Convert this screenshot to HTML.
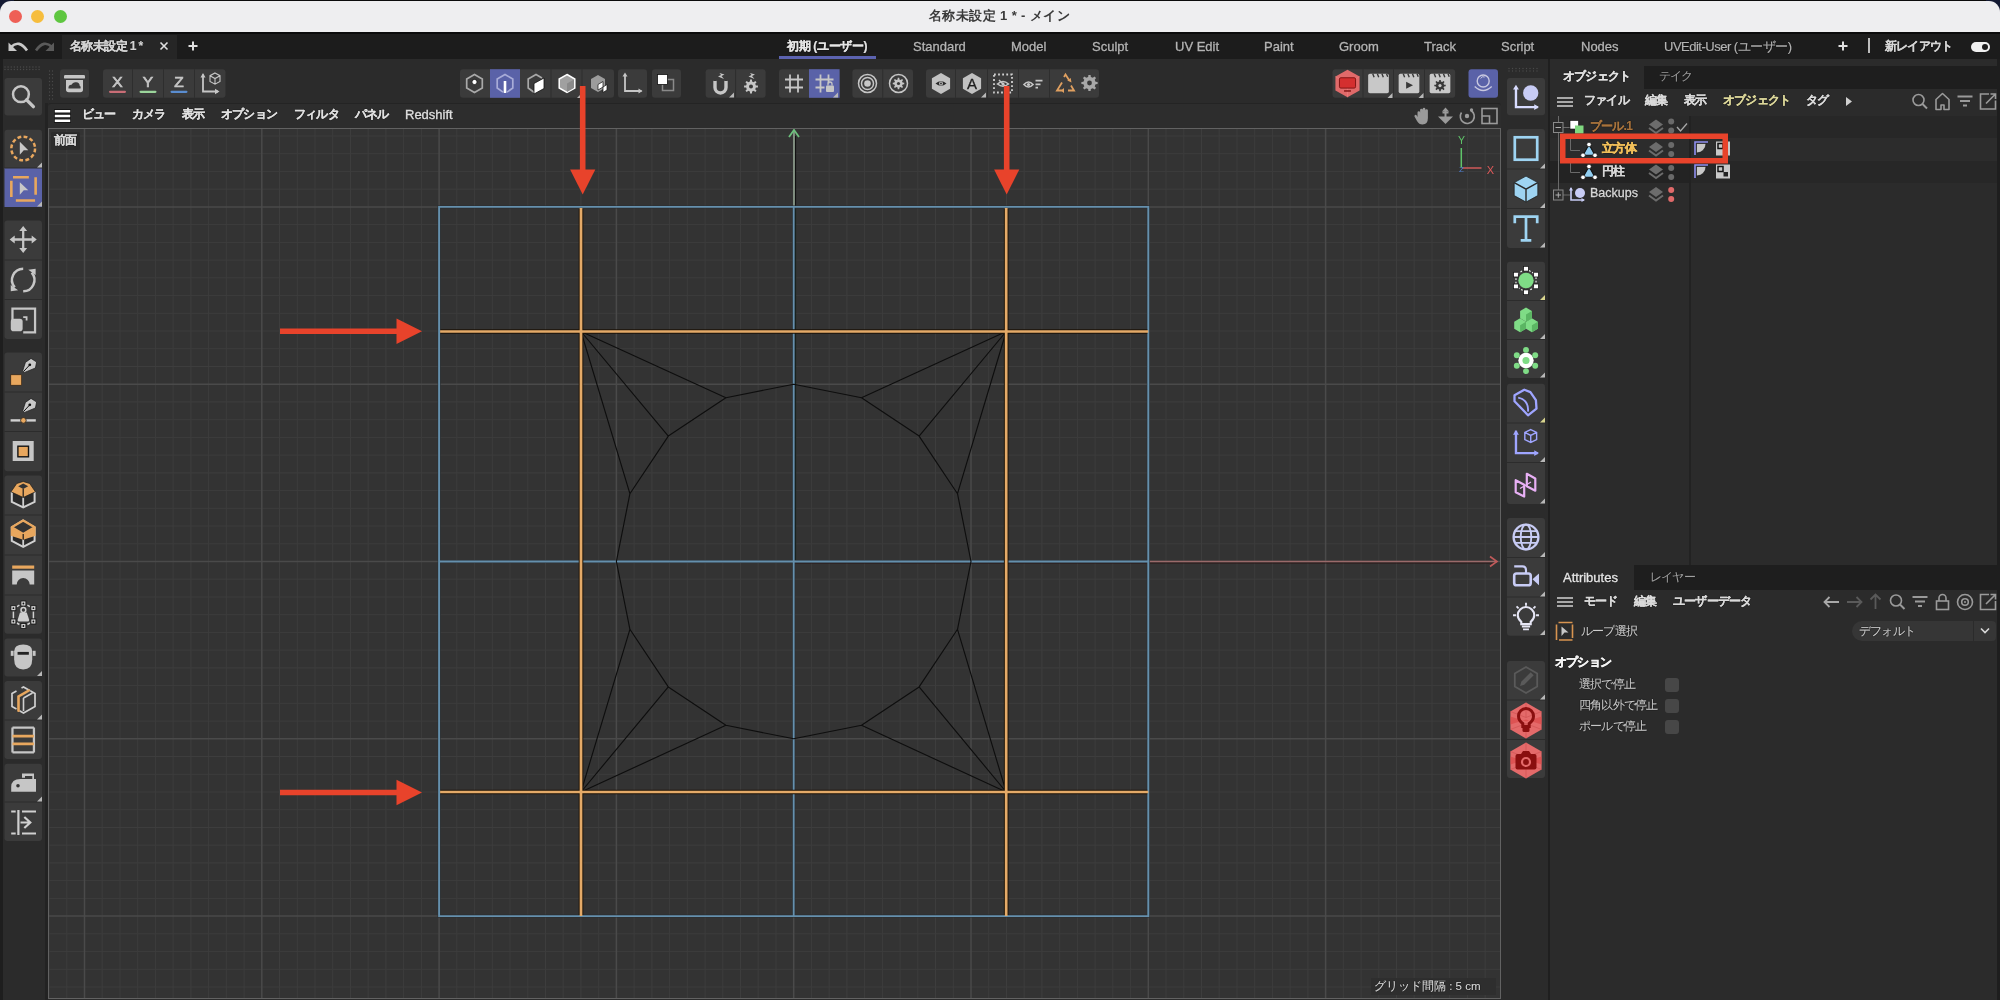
<!DOCTYPE html>
<html lang="ja"><head><meta charset="utf-8">
<style>
html,body{margin:0;padding:0}
body{width:2000px;height:1000px;overflow:hidden;background:#0b0b0b;font-family:"Liberation Sans",sans-serif;position:relative}
.a{position:absolute}
.t{position:absolute;white-space:nowrap;line-height:1;will-change:transform}
.d{text-shadow:0 0 1px #000,0 0 1px #000}
.w{-webkit-text-stroke:0.35px currentColor}
.j{font-weight:600;letter-spacing:-0.8px;-webkit-text-stroke:0.2px currentColor}
.r{font-weight:400;-webkit-text-stroke:0.1px currentColor}
.btn{position:absolute;background:#353535;border-radius:3px}
.sel{background:#5a62a6}
svg{position:absolute;overflow:visible}
.lt{top:40px;font-size:13px;color:#b4b4b4}
.mn{top:108px;font-size:12px;color:#e0e0e0}
.om{top:94px;font-size:12px;color:#dadada}
.op{font-size:11.5px;color:#c8c8c8}
.cb{left:1665px;width:14px;height:14px;border-radius:3px;background:#474747}
</style></head><body>
<!-- title bar -->
<div class="a" style="left:0;top:0;width:14px;height:14px;background:#141a33"></div><div class="a" style="left:1986px;top:0;width:14px;height:14px;background:#141a33"></div>
<div class="a" style="left:0;top:1px;width:2000px;height:31px;background:#eeeef0;border-radius:11px 11px 0 0"></div>
<div class="a" style="left:9px;top:10px;width:13px;height:13px;border-radius:50%;background:#ee5f56"></div>
<div class="a" style="left:31px;top:10px;width:13px;height:13px;border-radius:50%;background:#f6bd3d"></div>
<div class="a" style="left:54px;top:10px;width:13px;height:13px;border-radius:50%;background:#5ec640"></div>
<div class="t" style="left:929px;top:9px;font-size:13px;color:#3a3a3a;font-weight:bold;letter-spacing:0.4px">名称未設定 1 * - メイン</div>

<!-- tab bar -->
<div class="a" style="left:0;top:34px;width:2000px;height:25px;background:#1c1c1c"></div>
<div class="a" style="left:62px;top:35px;width:115px;height:24px;background:#262626"></div>
<div class="t d j" style="left:70px;top:40px;font-size:12px;color:#d4d4d4;letter-spacing:-0.6px">名称未設定 1&nbsp;*</div>
<svg style="left:0;top:33px" width="62" height="26" viewBox="0 0 62 26">
<path d="M11 14 Q19 6 27 17.5" stroke="#c8c8c8" stroke-width="2.6" fill="none"/><path d="M8.5 9.5V18H17Z" fill="#c8c8c8"/>
<path d="M36 17.5 Q44 6 52 14" stroke="#5a5a5a" stroke-width="2.6" fill="none"/><path d="M54 9.5V18H45.5Z" fill="#5a5a5a"/>
</svg>
<svg style="left:158px;top:40px" width="12" height="12" viewBox="0 0 12 12"><path d="M2.5 2.5L9.5 9.5M9.5 2.5L2.5 9.5" stroke="#e0e0e0" stroke-width="1.6"/></svg>
<svg style="left:187px;top:40px" width="12" height="12" viewBox="0 0 12 12"><path d="M6 1.5V10.5M1.5 6H10.5" stroke="#e0e0e0" stroke-width="2"/></svg>
<div class="a" style="left:779px;top:55.5px;width:97px;height:3.5px;background:#5c63b0"></div>
<div class="t d j" style="left:787px;top:40px;font-size:12px;color:#e6e6e6;letter-spacing:-0.35px">初期 (ユーザー)</div>
<div class="t d w lt" style="left:913px">Standard</div>
<div class="t d w lt" style="left:1011px">Model</div>
<div class="t d w lt" style="left:1092px">Sculpt</div>
<div class="t d w lt" style="left:1175px">UV Edit</div>
<div class="t d w lt" style="left:1264px">Paint</div>
<div class="t d w lt" style="left:1339px">Groom</div>
<div class="t d w lt" style="left:1424px">Track</div>
<div class="t d w lt" style="left:1501px">Script</div>
<div class="t d w lt" style="left:1581px">Nodes</div>
<div class="t d j lt" style="left:1664px;font-weight:400;letter-spacing:-0.5px">UVEdit-User (ユーザー)</div>
<svg style="left:1837px;top:40px" width="12" height="12" viewBox="0 0 12 12"><path d="M6 1.5V10.5M1.5 6H10.5" stroke="#e0e0e0" stroke-width="2"/></svg>
<div class="a" style="left:1868px;top:38px;width:1.5px;height:15px;background:#bdbdbd"></div>
<div class="t d j" style="left:1885px;top:40px;font-size:12px;color:#d4d4d4">新レイアウト</div>
<div class="a" style="left:1971px;top:42px;width:19px;height:10px;border-radius:5px;background:#f0f0f0"></div>
<div class="a" style="left:1982px;top:44px;width:6px;height:6px;border-radius:50%;background:#1c1c1c"></div>

<!-- main bg -->
<div class="a" style="left:0;top:59px;width:2000px;height:941px;background:#2b2b2b"></div>
<div class="a" style="left:0;top:59px;width:2.5px;height:941px;background:#1e1e1e"></div>
<div class="a" style="left:45px;top:103px;width:3px;height:897px;background:#232323"></div>
<div class="a" style="left:1548px;top:59px;width:2px;height:941px;background:#1f1f1f"></div>
<div class="a" style="left:1997px;top:59px;width:3px;height:941px;background:#1e1e1e"></div>

<!-- viewport menu bar -->
<div class="a" style="left:48px;top:103px;width:1453px;height:25px;background:#2d2d2d;border-top:1px solid #242424;box-sizing:border-box;border-radius:3px 3px 0 0"></div>
<div class="t d j mn" style="left:82px">ビュー</div>
<div class="t d j mn" style="left:132px">カメラ</div>
<div class="t d j mn" style="left:182px">表示</div>
<div class="t d j mn" style="left:221px">オプション</div>
<div class="t d j mn" style="left:294px">フィルタ</div>
<div class="t d j mn" style="left:355px">パネル</div>
<div class="t d w mn" style="left:405px;font-size:13px">Redshift</div>
<!-- viewport -->
<div class="a" style="left:48px;top:128px;width:1453px;height:871px;background:#333333;border:1px solid #626262;box-sizing:border-box"></div>
<svg class="a" style="left:0;top:0" width="2000" height="1000" viewBox="0 0 2000 1000">
<defs><clipPath id="vpc"><rect x="49" y="129" width="1451" height="869"/></clipPath></defs>
<g clip-path="url(#vpc)">
<path d="M49.0 129V1000M66.8 129V1000M102.2 129V1000M120.0 129V1000M137.7 129V1000M155.4 129V1000M173.1 129V1000M190.9 129V1000M208.6 129V1000M226.3 129V1000M244.1 129V1000M279.5 129V1000M297.3 129V1000M315.0 129V1000M332.7 129V1000M350.5 129V1000M368.2 129V1000M49 136.0H1500M385.9 129V1000M49 153.7H1500M403.6 129V1000M49 171.4H1500M421.4 129V1000M49 189.2H1500M456.8 129V1000M49 224.6H1500M474.6 129V1000M49 242.4H1500M492.3 129V1000M49 260.1H1500M510.0 129V1000M49 277.8H1500M527.8 129V1000M49 295.6H1500M545.5 129V1000M49 313.3H1500M563.2 129V1000M49 331.0H1500M580.9 129V1000M49 348.7H1500M598.7 129V1000M49 366.5H1500M634.1 129V1000M49 401.9H1500M651.9 129V1000M49 419.7H1500M669.6 129V1000M49 437.4H1500M687.3 129V1000M49 455.1H1500M705.1 129V1000M49 472.9H1500M722.8 129V1000M49 490.6H1500M740.5 129V1000M49 508.3H1500M758.2 129V1000M49 526.0H1500M776.0 129V1000M49 543.8H1500M811.4 129V1000M49 579.2H1500M829.2 129V1000M49 597.0H1500M846.9 129V1000M49 614.7H1500M864.6 129V1000M49 632.4H1500M882.4 129V1000M49 650.1H1500M900.1 129V1000M49 667.9H1500M917.8 129V1000M49 685.6H1500M935.5 129V1000M49 703.3H1500M953.3 129V1000M49 721.1H1500M988.7 129V1000M49 756.5H1500M1006.5 129V1000M49 774.3H1500M1024.2 129V1000M49 792.0H1500M1041.9 129V1000M49 809.7H1500M1059.7 129V1000M49 827.5H1500M1077.4 129V1000M49 845.2H1500M1095.1 129V1000M49 862.9H1500M1112.8 129V1000M49 880.6H1500M1130.6 129V1000M49 898.4H1500M1166.0 129V1000M49 933.8H1500M1183.8 129V1000M49 951.6H1500M1201.5 129V1000M49 969.3H1500M1219.2 129V1000M49 987.0H1500M1237.0 129V1000M1254.7 129V1000M1272.4 129V1000M1290.1 129V1000M1307.9 129V1000M1343.3 129V1000M1361.1 129V1000M1378.8 129V1000M1396.5 129V1000M1414.2 129V1000M1432.0 129V1000M1449.7 129V1000M1467.4 129V1000M1485.2 129V1000" stroke="#3d3d3d" stroke-width="1" fill="none"/>
<path d="M84.5 129V1000M261.8 129V1000M439.1 129V1000M49 206.9H1500M616.4 129V1000M49 384.2H1500M793.7 129V1000M49 561.5H1500M971.0 129V1000M49 738.8H1500M1148.3 129V1000M49 916.1H1500M1325.6 129V1000" stroke="#4a4a4a" stroke-width="1.5" fill="none"/>
<path d="M795.5 136V206" stroke="#111" stroke-width="1.2"/>
<path d="M794 130V206" stroke="#8fa08f" stroke-width="1.6"/>
<path d="M789 137L794 130L799 137" stroke="#6cc07c" stroke-width="1.8" fill="none"/>
<path d="M1149 563H1496" stroke="#2a1616" stroke-width="1.2"/>
<path d="M1149 561.5H1497" stroke="#9a6a6a" stroke-width="1.4"/>
<path d="M1490 556.5L1497 561.5L1490 566.5" stroke="#c05a5a" stroke-width="1.6" fill="none"/>
<path d="M795.5 208V560" stroke="#14201a" stroke-width="1.2"/>
<path d="M795 563H1147" stroke="#2a1616" stroke-width="1.2"/>
<path d="M439.1 206.9H1148.3V916.1H439.1ZM793.7 206.9V916.1M439.1 561.5H1148.3" stroke="#2a2f33" stroke-width="3" fill="none"/>
<path d="M439.1 206.9H1148.3V916.1H439.1Z" stroke="#6590ad" stroke-width="1.9" fill="none"/>
<path d="M793.7 206.9V916.1M439.1 561.5H1148.3" stroke="#6590ad" stroke-width="1.8" fill="none"/>
<path d="M971.0 561.5L957.5 493.7L919.1 436.1L861.5 397.7L793.7 384.2L725.9 397.7L668.3 436.1L629.9 493.7L616.4 561.5L629.9 629.3L668.3 686.9L725.9 725.3L793.7 738.8L861.5 725.3L919.1 686.9L957.5 629.3ZM1006.2 331.5L957.5 493.7M1006.2 331.5L919.1 436.1M1006.2 331.5L861.5 397.7M581.0 331.5L725.9 397.7M581.0 331.5L668.3 436.1M581.0 331.5L629.9 493.7M581.0 792.0L629.9 629.3M581.0 792.0L668.3 686.9M581.0 792.0L725.9 725.3M1006.2 792.0L861.5 725.3M1006.2 792.0L919.1 686.9M1006.2 792.0L957.5 629.3" stroke="#0e0e0e" stroke-width="1.15" fill="none" stroke-linejoin="round"/>
<path d="M581.0 208.9V915.1M1006.2 208.9V915.1M440.6 331.5H1147.3M440.6 792.0H1147.3" stroke="#1c1308" stroke-width="4.6" fill="none"/>
<path d="M581.0 207.9V916.1M1006.2 207.9V916.1M440.1 331.5H1148.3M440.1 792.0H1148.3" stroke="#e4aa68" stroke-width="2.7" fill="none"/>
</g>
<path d="M1461.3 148V167.5" stroke="#5fc46a" stroke-width="1.5"/><path d="M1462 168H1481.5" stroke="#d05a5a" stroke-width="1.5"/>
<text x="1461.5" y="143.5" text-anchor="middle" font-family="Liberation Sans" font-size="10.5" fill="#5fc46a">Y</text>
<text x="1490.5" y="173.5" text-anchor="middle" font-family="Liberation Sans" font-size="11" fill="#e05a5a">X</text>
<text x="1461.5" y="172" text-anchor="middle" font-family="Liberation Sans" font-size="8" fill="#4f7fd0">Z</text>
</svg>

<!-- object manager -->
<div class="a" style="left:1550px;top:65.5px;width:447px;height:23.5px;background:#1e1e1e"></div>
<div class="a" style="left:1550px;top:65.5px;width:94px;height:23.5px;background:#2b2b2b"></div>
<div class="t d j" style="left:1563px;top:70px;font-size:12px;color:#e2e2e2">オブジェクト</div>
<div class="t d j r" style="left:1659px;top:70px;font-size:12px;color:#a0a0a0">テイク</div>
<div class="a" style="left:1550px;top:89px;width:447px;height:26.5px;background:#2b2b2b"></div>
<div class="t d j om" style="left:1584px">ファイル</div>
<div class="t d j om" style="left:1645px">編集</div>
<div class="t d j om" style="left:1684px">表示</div>
<div class="t d j om" style="left:1723px;color:#dcd79a">オブジェクト</div>
<div class="t d j om" style="left:1806px">タグ</div>
<!-- rows -->
<div class="a" style="left:1550px;top:115.5px;width:447px;height:449px;background:#2b2b2b"></div>
<div class="a" style="left:1550px;top:115.5px;width:447px;height:22.5px;background:#272727"></div>
<div class="a" style="left:1550px;top:138px;width:447px;height:22.5px;background:#2c2c2c"></div>
<div class="a" style="left:1550px;top:160.5px;width:447px;height:22.5px;background:#272727"></div>

<div class="a" style="left:1550px;top:115.5px;width:140px;height:22.5px;background:#2a2a2a"></div>
<div class="a" style="left:1550px;top:138px;width:140px;height:22.5px;background:#2c2c2c"></div>
<div class="a" style="left:1550px;top:160.5px;width:140px;height:22.5px;background:#232323"></div>
<div class="a" style="left:1689px;top:115.5px;width:1.5px;height:449px;background:#222"></div>
<div class="t d j" style="left:1590px;top:120px;font-size:12px;color:#a8743e">ブール.1</div>
<div class="t d" style="left:1602px;top:142px;font-size:12px;color:#f2c05a;font-weight:bold;letter-spacing:-0.7px;-webkit-text-stroke:0.45px currentColor">立方体</div>
<div class="t d j" style="left:1602px;top:165px;font-size:12px;color:#d8d8d8">円柱</div>
<div class="t d w" style="left:1590px;top:187px;font-size:12.5px;color:#d8d8d8">Backups</div>
<!-- attributes -->
<div class="a" style="left:1550px;top:564.5px;width:447px;height:25px;background:#1e1e1e"></div>
<div class="a" style="left:1550px;top:564.5px;width:84px;height:25px;background:#2b2b2b"></div>
<div class="t d w" style="left:1563px;top:571px;font-size:13px;color:#e6e6e6">Attributes</div>
<div class="t d j r" style="left:1650px;top:571px;font-size:12px;color:#a0a0a0">レイヤー</div>
<div class="t d j om" style="left:1584px;top:595px">モード</div>
<div class="t d j om" style="left:1634px;top:595px">編集</div>
<div class="t d j om" style="left:1673px;top:595px">ユーザーデータ</div>
<div class="t d j r" style="left:1581px;top:625px;font-size:12px;color:#cfcfcf">ループ選択</div>
<div class="a" style="left:1852px;top:621px;width:144px;height:20px;border-radius:10px 4px 4px 10px;background:#363636"></div>
<div class="a" style="left:1973px;top:621px;width:1px;height:20px;background:#2b2b2b"></div>
<div class="t d j r" style="left:1859px;top:625px;font-size:12px;color:#d2d2d2">デフォルト</div>
<div class="t d" style="left:1555px;top:656px;font-size:12px;color:#f4f4f4;font-weight:bold;letter-spacing:-0.8px;-webkit-text-stroke:0.5px currentColor">オプション</div>
<div class="t d j r op" style="left:1579px;top:679px">選択で停止</div>
<div class="t d j r op" style="left:1579px;top:700px">四角以外で停止</div>
<div class="t d j r op" style="left:1579px;top:721px">ポールで停止</div>
<div class="a cb" style="top:678px"></div>
<div class="a cb" style="top:699px"></div>
<div class="a cb" style="top:720px"></div>
<!-- grid label -->
<div class="a" style="left:1371px;top:978px;width:125px;height:17px;background:#2e2e2e"></div>
<div class="t d j r" style="left:1374px;top:981px;font-size:11.5px;color:#dedede;letter-spacing:0">グリッド間隔 : 5 cm</div>
<div class="a" style="left:51px;top:132px;width:29px;height:18px;background:#2c2c2c;border-radius:2px"></div>
<div class="t d j" style="left:54px;top:135px;font-size:11.5px;color:#d8d8d8">前面</div>

<svg class="a" style="left:0;top:0" width="2000" height="1000" viewBox="0 0 2000 1000">
<g fill="#4a4a4a"><circle cx="5.0" cy="67" r="0.7"/><circle cx="5.0" cy="69.5" r="0.7"/><circle cx="8.1" cy="67" r="0.7"/><circle cx="8.1" cy="69.5" r="0.7"/><circle cx="11.2" cy="67" r="0.7"/><circle cx="11.2" cy="69.5" r="0.7"/><circle cx="14.3" cy="67" r="0.7"/><circle cx="14.3" cy="69.5" r="0.7"/><circle cx="17.4" cy="67" r="0.7"/><circle cx="17.4" cy="69.5" r="0.7"/><circle cx="20.5" cy="67" r="0.7"/><circle cx="20.5" cy="69.5" r="0.7"/><circle cx="23.6" cy="67" r="0.7"/><circle cx="23.6" cy="69.5" r="0.7"/><circle cx="26.7" cy="67" r="0.7"/><circle cx="26.7" cy="69.5" r="0.7"/><circle cx="29.8" cy="67" r="0.7"/><circle cx="29.8" cy="69.5" r="0.7"/><circle cx="32.9" cy="67" r="0.7"/><circle cx="32.9" cy="69.5" r="0.7"/><circle cx="36.0" cy="67" r="0.7"/><circle cx="36.0" cy="69.5" r="0.7"/><circle cx="39.1" cy="67" r="0.7"/><circle cx="39.1" cy="69.5" r="0.7"/><circle cx="49.5" cy="71.0" r="0.7"/><circle cx="52.5" cy="71.0" r="0.7"/><circle cx="49.5" cy="74.5" r="0.7"/><circle cx="52.5" cy="74.5" r="0.7"/><circle cx="49.5" cy="78.0" r="0.7"/><circle cx="52.5" cy="78.0" r="0.7"/><circle cx="49.5" cy="81.5" r="0.7"/><circle cx="52.5" cy="81.5" r="0.7"/><circle cx="49.5" cy="85.0" r="0.7"/><circle cx="52.5" cy="85.0" r="0.7"/><circle cx="49.5" cy="88.5" r="0.7"/><circle cx="52.5" cy="88.5" r="0.7"/><circle cx="49.5" cy="92.0" r="0.7"/><circle cx="52.5" cy="92.0" r="0.7"/><circle cx="49.5" cy="95.5" r="0.7"/><circle cx="52.5" cy="95.5" r="0.7"/><circle cx="49.5" cy="99.0" r="0.7"/><circle cx="52.5" cy="99.0" r="0.7"/></g>
<rect x="60.0" y="69.2" width="29.0" height="28.6" rx="3" fill="#3b3b3b"/>
<g transform="translate(74.5 83.5) scale(1.00)"><rect x="-10.5" y="-8.5" width="21" height="3.6" rx="1.2" fill="#c6c6c6"/><path d="M-8.5 -3.5H8.5V6Q8.5 8.8 5.8 8.8H-5.8Q-8.5 8.8 -8.5 6Z" fill="#c6c6c6"/><path d="M-6 5Q-6.5 1.5 -3 1.2Q-1.5 -2 1.8 -1.2Q5 -0.8 5.2 2.2Q6.8 3 6 5Z" fill="#3b3b3b"/></g>
<rect x="103.0" y="69.2" width="122.5" height="28.6" rx="3" fill="#3b3b3b"/><path d="M132.5 69.2V97.8" stroke="#2e2e2e" stroke-width="1"/><path d="M163.5 69.2V97.8" stroke="#2e2e2e" stroke-width="1"/><path d="M194.5 69.2V97.8" stroke="#2e2e2e" stroke-width="1"/>
<g transform="translate(117.5 83.5) scale(1.00)"><text x="0" y="3.5" text-anchor="middle" font-family="Liberation Sans" font-size="15.5" fill="#c6c6c6" stroke="#c6c6c6" stroke-width="0.7">X</text><rect x="-8.5" y="7.2" width="17" height="2.2" rx="1.1" fill="#c96d76"/></g>
<g transform="translate(148.0 83.5) scale(1.00)"><text x="0" y="3.5" text-anchor="middle" font-family="Liberation Sans" font-size="15.5" fill="#c6c6c6" stroke="#c6c6c6" stroke-width="0.7">Y</text><rect x="-8.5" y="7.2" width="17" height="2.2" rx="1.1" fill="#9bd59b"/></g>
<g transform="translate(179.0 83.5) scale(1.00)"><text x="0" y="3.5" text-anchor="middle" font-family="Liberation Sans" font-size="15.5" fill="#c6c6c6" stroke="#c6c6c6" stroke-width="0.7">Z</text><rect x="-8.5" y="7.2" width="17" height="2.2" rx="1.1" fill="#5a8dd0"/></g>
<g transform="translate(210.0 83.5) scale(1.00)"><path d="M-7 -9V8H8" stroke="#c6c6c6" stroke-width="1.8" fill="none"/><path d="M-9.5 -6L-7 -10.5L-4.5 -6ZM5 5.3L9.5 8L5 10.7Z" fill="#c6c6c6"/><path d="M5 -10.5L10 -7.8V-2L5 0.7L0 -2V-7.8ZM0 -7.8L5 -5L10 -7.8M5 -5V0.7" stroke="#c6c6c6" stroke-width="1.1" fill="none"/></g>
<rect x="460.0" y="69.2" width="154.0" height="28.6" rx="3" fill="#3b3b3b"/><rect x="490.0" y="69.2" width="30.0" height="28.6" fill="#5a62a8"/><path d="M551.0 69.2V97.8" stroke="#2e2e2e" stroke-width="1"/><path d="M582.0 69.2V97.8" stroke="#2e2e2e" stroke-width="1"/><path d="M582.0 98.0L577.0 98.0L582.0 93.0Z" fill="#b8b8b8"/>
<g transform="translate(474.5 83.5) scale(1.00)"><path d="M0 -9L7.8 -4.5V4.5L0 9L-7.8 4.5V-4.5Z" stroke="#a9a9a9" stroke-width="1.7" fill="none"/><circle cx="0" cy="-1.5" r="2.6" fill="#fff" stroke="#111" stroke-width="0.8"/></g>
<g transform="translate(505.0 83.5) scale(1.00)"><path d="M-2 8.6L-7.8 4.5V-4.5L0 -9L7.8 -4.5V4.5L2 8.6" stroke="#a8acd8" stroke-width="1.7" fill="none"/><rect x="-1.3" y="-2.5" width="2.6" height="12" fill="#fff"/></g>
<g transform="translate(536.0 83.5) scale(1.00)"><path d="M-1 9.5L-7.8 4.5V-4.5L0 -9L6 -5.5" stroke="#a9a9a9" stroke-width="1.7" fill="none"/><path d="M-2 0L8 -5.5V5L-2 10.5Z" fill="#fff" stroke="#111" stroke-width="0.8"/></g>
<g transform="translate(567.0 83.5) scale(1.00)"><path d="M0 -9L7.8 -4.5V4.5L0 9L-7.8 4.5V-4.5Z" fill="#a0a0a0" stroke="#fff" stroke-width="1.5"/><path d="M0 0L7 -4V4.5L0 8.5Z" fill="#8a8a8a"/></g>
<g transform="translate(598.0 83.5) scale(1.00)"><path d="M-7 -4.5L0 -8.5L7 -4.5V4.5L0 8.5L-7 4.5Z" fill="#9c9c9c"/><path d="M0 1L5 -2V3.5L0 6.5ZM5 3.5L9 1V6.5L5 9Z" fill="#fff" stroke="#111" stroke-width="0.7"/></g>
<rect x="618.0" y="69.2" width="29.0" height="28.6" rx="3" fill="#3b3b3b"/>
<g transform="translate(632.5 83.5) scale(1.00)"><path d="M-7.5 -8V7.5H9" stroke="#c6c6c6" stroke-width="1.8" fill="none"/><path d="M-10 -7L-7.5 -11L-5 -7ZM6 5L10 7.5L6 10Z" fill="#c6c6c6"/></g>
<rect x="652.0" y="69.2" width="29.0" height="28.6" rx="3" fill="#3b3b3b"/>
<g transform="translate(666.5 83.5) scale(1.00)"><rect x="-4" y="-4" width="11" height="11" stroke="#8a8a8a" stroke-width="1.5" fill="none"/><rect x="-9" y="-9" width="10" height="10" fill="#fff" stroke="#111" stroke-width="0.8"/></g>
<rect x="705.6" y="69.2" width="60.0" height="28.6" rx="3" fill="#3b3b3b"/><path d="M735.6 69.2V97.8" stroke="#2e2e2e" stroke-width="1"/><path d="M734.0 97.5L729.0 97.5L734.0 92.5Z" fill="#b8b8b8"/>
<g transform="translate(720.5 84.5) scale(1.00)"><path d="M-5.5 -4V3A5.5 5.5 0 0 0 5.5 3V-4" stroke="#c6c6c6" stroke-width="3.4" fill="none"/><path d="M-7.2 -4H-3.8M3.8 -4H7.2" stroke="#383838" stroke-width="1"/><path d="M-1 -11.5L4 -10L1 -8.5L3.5 -5.5L-2.5 -8L0.5 -9.5Z" fill="#c6c6c6"/></g>
<g transform="translate(751.0 84.5) scale(1.00)"><path d="M4.88 0.93L6.93 1.04L6.93 2.96L4.88 3.07L4.21 4.70L5.58 6.22L4.22 7.58L2.70 6.21L1.07 6.88L0.96 8.93L-0.96 8.93L-1.07 6.88L-2.70 6.21L-4.22 7.58L-5.58 6.22L-4.21 4.70L-4.88 3.07L-6.93 2.96L-6.93 1.04L-4.88 0.93L-4.21 -0.70L-5.58 -2.22L-4.22 -3.58L-2.70 -2.21L-1.07 -2.88L-0.96 -4.93L0.96 -4.93L1.07 -2.88L2.70 -2.21L4.22 -3.58L5.58 -2.22L4.21 -0.70Z" fill="#c6c6c6"/><circle cx="0.0" cy="2.0" r="2.0" fill="#383838"/><path d="M-1 -11.5L4 -10L1 -8.5L3.5 -5.5L-2.5 -8L0.5 -9.5Z" fill="#c6c6c6"/></g>
<rect x="779.0" y="69.2" width="60.6" height="28.6" rx="3" fill="#3b3b3b"/><rect x="809.0" y="69.2" width="30.6" height="28.6" fill="#5a62a8"/><path d="M838.0 97.5L833.0 97.5L838.0 92.5Z" fill="#b8b8b8"/>
<g transform="translate(794.0 83.5) scale(1.00)"><path d="M-4 -9V9M4 -9V9M-9 -4H9M-9 4H9" stroke="#c6c6c6" stroke-width="1.8"/></g>
<g transform="translate(824.5 83.5) scale(1.00)"><path d="M-4 -9V9M4 -9V0M-9 -4H9M-9 4H0" stroke="#c6c6c6" stroke-width="1.8"/><rect x="1.5" y="2" width="8" height="6.5" rx="1" fill="#c6c6c6"/><path d="M3.5 2V0.5A2 2 0 0 1 7.5 0.5V2" stroke="#c6c6c6" stroke-width="1.3" fill="none"/></g>
<rect x="852.4" y="69.2" width="60.6" height="28.6" rx="3" fill="#3b3b3b"/><path d="M882.7 69.2V97.8" stroke="#2e2e2e" stroke-width="1"/>
<g transform="translate(867.5 83.5) scale(1.00)"><circle r="9" fill="none" stroke="#c6c6c6" stroke-width="1.5"/><circle r="6" fill="none" stroke="#c6c6c6" stroke-width="1.5"/><circle r="3.3" fill="#c6c6c6"/></g>
<g transform="translate(898.5 83.5) scale(1.00)"><circle r="9" fill="none" stroke="#c6c6c6" stroke-width="1.5"/><path d="M4.10 -0.90L5.75 -0.79L5.75 0.79L4.10 0.90L3.54 2.26L4.62 3.50L3.50 4.62L2.26 3.54L0.90 4.10L0.79 5.75L-0.79 5.75L-0.90 4.10L-2.26 3.54L-3.50 4.62L-4.62 3.50L-3.54 2.26L-4.10 0.90L-5.75 0.79L-5.75 -0.79L-4.10 -0.90L-3.54 -2.26L-4.62 -3.50L-3.50 -4.62L-2.26 -3.54L-0.90 -4.10L-0.79 -5.75L0.79 -5.75L0.90 -4.10L2.26 -3.54L3.50 -4.62L4.62 -3.50L3.54 -2.26Z" fill="#c6c6c6"/><circle cx="0.0" cy="0.0" r="1.6" fill="#383838"/></g>
<rect x="926.0" y="69.2" width="173.0" height="28.6" rx="3" fill="#3b3b3b"/><path d="M955.5 69.2V97.8" stroke="#2e2e2e" stroke-width="1"/><path d="M987.5 69.2V97.8" stroke="#2e2e2e" stroke-width="1"/><path d="M1018.5 69.2V97.8" stroke="#2e2e2e" stroke-width="1"/><path d="M1049.5 69.2V97.8" stroke="#2e2e2e" stroke-width="1"/><path d="M986.0 97.5L981.0 97.5L986.0 92.5Z" fill="#b8b8b8"/>
<g transform="translate(941.0 83.5) scale(1.00)"><path d="M0 -10.5L9.1 -5.25V5.25L0 10.5L-9.1 5.25V-5.25Z" fill="#c2c2c2"/><path d="M-5.5 0Q0 -4.5 5.5 0Q0 4.5 -5.5 0Z" fill="#2a2a2a"/><circle r="1.9" fill="#c2c2c2"/><circle r="0.9" fill="#2a2a2a"/></g>
<g transform="translate(972.0 83.5) scale(1.00)"><path d="M0 -10.5L9.1 -5.25V5.25L0 10.5L-9.1 5.25V-5.25Z" fill="#c2c2c2"/><text x="0" y="5.5" text-anchor="middle" font-family="Liberation Sans" font-size="15" fill="#1e1e1e" stroke="#1e1e1e" stroke-width="0.3">A</text></g>
<g transform="translate(1003.0 83.5) scale(1.00)"><rect x="-9" y="-9" width="18" height="18" fill="none" stroke="#d0d0d0" stroke-width="1.8" stroke-dasharray="1.8 2.3"/><path d="M-5.5 0.5Q0 -4.5 5.5 0.5Q0 5 -5.5 0.5Z" fill="none" stroke="#c6c6c6" stroke-width="1.6"/><circle cx="0" cy="0.5" r="1.5" fill="#c6c6c6"/><path d="M-4 -3.5L4 4.5" stroke="#c6c6c6" stroke-width="1.4"/></g>
<g transform="translate(1034.0 83.5) scale(1.00)"><path d="M-10 1Q-5.5 -4 -1 1Q-5.5 6 -10 1Z" fill="none" stroke="#c6c6c6" stroke-width="1.7"/><circle cx="-5.5" cy="1" r="1.6" fill="#c6c6c6"/><path d="M1.5 -2.8H8.5M1.5 0.8H6.5M1.5 4.2H4" stroke="#c6c6c6" stroke-width="1.8"/></g>
<g transform="translate(1065.5 83.5) scale(1.00)"><path d="M-1.5 -6.5L0 -9L3.5 -3.5M-3.5 -1L-8.5 7H-3M2.5 7H8.5L5.5 2" stroke="#e0a060" stroke-width="1.8" fill="none" stroke-linejoin="miter"/><path d="M1.8 -3L6 -1L5.2 -5.5ZM-1.5 4.5L-4.5 7L-1.5 9.5Z" fill="#e0a060"/></g>
<g transform="translate(1089.5 83.0) scale(1.00)"><path d="M6.06 -1.33L8.12 -1.12L8.12 1.12L6.06 1.33L5.22 3.34L6.54 4.95L4.95 6.54L3.34 5.22L1.33 6.06L1.12 8.12L-1.12 8.12L-1.33 6.06L-3.34 5.22L-4.95 6.54L-6.54 4.95L-5.22 3.34L-6.06 1.33L-8.12 1.12L-8.12 -1.12L-6.06 -1.33L-5.22 -3.34L-6.54 -4.95L-4.95 -6.54L-3.34 -5.22L-1.33 -6.06L-1.12 -8.12L1.12 -8.12L1.33 -6.06L3.34 -5.22L4.95 -6.54L6.54 -4.95L5.22 -3.34Z" fill="#a8a8a8"/><circle cx="0.0" cy="0.0" r="2.4" fill="#383838"/></g>
<rect x="1332.5" y="69.2" width="122.7" height="28.6" rx="3" fill="#3b3b3b"/><path d="M1363.0 69.2V97.8" stroke="#2e2e2e" stroke-width="1"/><path d="M1393.5 69.2V97.8" stroke="#2e2e2e" stroke-width="1"/><path d="M1424.5 69.2V97.8" stroke="#2e2e2e" stroke-width="1"/><path d="M1392.5 98.0L1387.5 98.0L1392.5 93.0Z" fill="#b8b8b8"/><path d="M1423.5 98.0L1418.5 98.0L1423.5 93.0Z" fill="#b8b8b8"/>
<g transform="translate(1347.5 83.5) scale(1.15)"><path d="M0 -12L10.5 -6V6L0 12L-10.5 6V-6Z" fill="#e06a6a"/><path d="M-10.5 -6L0 0L10.5 -6M0 0V12" stroke="#f08a8a" stroke-width="0.8" fill="none" opacity="0.5"/><rect x="-7" y="-5" width="14" height="9" rx="1.2" fill="#d42f2f" stroke="#7a1010" stroke-width="0.8"/><path d="M-3 6.5H3" stroke="#7a1010" stroke-width="1.2"/></g>
<g transform="translate(1378.5 83.5) scale(1.15)"><path d="M-9 -7Q-9 -8.5 -7.5 -8.5H7.5Q9 -8.5 9 -7V7Q9 8.5 7.5 8.5H-7.5Q-9 8.5 -9 7Z" fill="#c8c8c8"/><path d="M-5 -8.5L-3.8 -5.5M-1 -8.5L0.2 -5.5M3 -8.5L4.2 -5.5M7 -8.5L8 -5.8" stroke="#383838" stroke-width="1.2"/></g>
<g transform="translate(1409.0 83.5) scale(1.15)"><path d="M-9 -7Q-9 -8.5 -7.5 -8.5H7.5Q9 -8.5 9 -7V7Q9 8.5 7.5 8.5H-7.5Q-9 8.5 -9 7Z" fill="#c8c8c8"/><path d="M-5 -8.5L-3.8 -5.5M-1 -8.5L0.2 -5.5M3 -8.5L4.2 -5.5M7 -8.5L8 -5.8" stroke="#383838" stroke-width="1.2"/><path d="M-2.5 -1.5L3.5 1.5L-2.5 4.5Z" fill="#383838"/></g>
<g transform="translate(1440.0 83.5) scale(1.15)"><path d="M-9 -7Q-9 -8.5 -7.5 -8.5H7.5Q9 -8.5 9 -7V7Q9 8.5 7.5 8.5H-7.5Q-9 8.5 -9 7Z" fill="#c8c8c8"/><path d="M-5 -8.5L-3.8 -5.5M-1 -8.5L0.2 -5.5M3 -8.5L4.2 -5.5M7 -8.5L8 -5.8" stroke="#383838" stroke-width="1.2"/><path d="M3.52 1.03L4.95 1.11L4.95 2.49L3.52 2.57L3.03 3.74L3.99 4.82L3.02 5.79L1.94 4.83L0.77 5.32L0.69 6.75L-0.69 6.75L-0.77 5.32L-1.94 4.83L-3.02 5.79L-3.99 4.82L-3.03 3.74L-3.52 2.57L-4.95 2.49L-4.95 1.11L-3.52 1.03L-3.03 -0.14L-3.99 -1.22L-3.02 -2.19L-1.94 -1.23L-0.77 -1.72L-0.69 -3.15L0.69 -3.15L0.77 -1.72L1.94 -1.23L3.02 -2.19L3.99 -1.22L3.03 -0.14Z" fill="#383838"/><circle cx="0.0" cy="1.8" r="1.4" fill="#c8c8c8"/></g>
<rect x="1468.5" y="69.2" width="29.5" height="28.6" rx="3" fill="#5a62a8"/>
<g transform="translate(1483.2 83.5) scale(1.00)"><circle cx="0" cy="-2.5" r="6" fill="none" stroke="#c8c8e0" stroke-width="1.4"/><path d="M-2.5 -5A3 3 0 0 1 1.5 -6.5" stroke="#c8c8e0" stroke-width="1" fill="none"/><path d="M-8.5 3Q0 11 8.5 3" stroke="#c8c8e0" stroke-width="1.4" fill="none"/></g>
<g fill="#4a4a4a"><circle cx="1509.0" cy="68.5" r="0.7"/><circle cx="1509.0" cy="71" r="0.7"/><circle cx="1512.5" cy="68.5" r="0.7"/><circle cx="1512.5" cy="71" r="0.7"/><circle cx="1516.0" cy="68.5" r="0.7"/><circle cx="1516.0" cy="71" r="0.7"/><circle cx="1519.5" cy="68.5" r="0.7"/><circle cx="1519.5" cy="71" r="0.7"/><circle cx="1523.0" cy="68.5" r="0.7"/><circle cx="1523.0" cy="71" r="0.7"/><circle cx="1526.5" cy="68.5" r="0.7"/><circle cx="1526.5" cy="71" r="0.7"/><circle cx="1530.0" cy="68.5" r="0.7"/><circle cx="1530.0" cy="71" r="0.7"/><circle cx="1533.5" cy="68.5" r="0.7"/><circle cx="1533.5" cy="71" r="0.7"/><circle cx="1537.0" cy="68.5" r="0.7"/><circle cx="1537.0" cy="71" r="0.7"/></g>
<g transform="translate(1423.0 116.0) scale(1.00)"><path d="M-5.5 1V-3.5A1.3 1.3 0 0 1 -2.9 -3.5V-0.5V-6A1.3 1.3 0 0 1 -0.3 -6V-1V-7A1.3 1.3 0 0 1 2.3 -7V-1V-5.5A1.3 1.3 0 0 1 4.9 -5.5V2Q4.9 8.5 -0.5 8.5Q-4 8.5 -6 5L-8.5 0.5A1.2 1.2 0 0 1 -6.3 -0.5Z" fill="#9a9a9a"/></g>
<g transform="translate(1445.5 116.0) scale(1.00)"><path d="M-7.5 0.5H7.5L0 8Z" fill="#9a9a9a"/><path d="M0 -6V1M-3 -3.5H3" stroke="#9a9a9a" stroke-width="2"/><path d="M-3.5 -4.5L0 -8.5L3.5 -4.5Z" fill="#9a9a9a"/></g>
<g transform="translate(1467.0 116.0) scale(1.00)"><path d="M4 -5.5A7 7 0 1 1 -5.5 -3.5" stroke="#9a9a9a" stroke-width="1.6" fill="none"/><circle r="2.2" fill="#9a9a9a"/><circle cx="4.5" cy="-6" r="1.7" fill="#9a9a9a"/></g>
<g transform="translate(1489.5 116.0) scale(1.00)"><rect x="-7.5" y="-7.5" width="15" height="15" fill="none" stroke="#9a9a9a" stroke-width="1.6"/><path d="M-7.5 0H0V7.5" stroke="#9a9a9a" stroke-width="1.6" fill="none"/></g>
<path d="M54 111.3H71M54 116H71M54 120.7H71" stroke="#111" stroke-width="4.2"/><path d="M54.8 111.3H70.2M54.8 116H70.2M54.8 120.7H70.2" stroke="#fff" stroke-width="2.6"/>
<rect x="4.5" y="78.0" width="37.5" height="37.5" rx="3" fill="#3b3b3b"/>
<g transform="translate(23.2 97.0) scale(1.13)"><circle cx="-2" cy="-2.5" r="7" fill="none" stroke="#c6c6c6" stroke-width="2.2"/><path d="M3 2.5L9 8.5" stroke="#c6c6c6" stroke-width="3" stroke-linecap="round"/></g>
<rect x="4.5" y="129.7" width="37.5" height="77.3" rx="3" fill="#3b3b3b"/><rect x="4.5" y="168.0" width="37.5" height="39.0" fill="#5a62a8"/><path d="M4.5 168.0H42.0" stroke="#2c2c2c" stroke-width="1"/><path d="M42.0 167.5L37.0 167.5L42.0 162.5Z" fill="#b8b8b8"/><path d="M42.0 206.5L37.0 206.5L42.0 201.5Z" fill="#b8b8b8"/>
<g transform="translate(23.2 148.5) scale(1.13)"><circle r="10.5" fill="none" stroke="#e8a75e" stroke-width="2.2" stroke-dasharray="3.4 2.1"/><path d="M-3 -6L4.5 1.5H0.5L-3 5.5Z" fill="#c8c8c8"/></g>
<g transform="translate(23.2 188.0) scale(1.13)"><path d="M-9 -9.5H5M-10.5 -6.5V8M11 -9.5V6M-6.5 11H10.5" stroke="#e8a75e" stroke-width="2.3" fill="none"/><path d="M-3 -5L4.5 2H0.5L-3 6Z" fill="#c8c8c8"/></g>
<rect x="4.5" y="220.6" width="37.5" height="118.4" rx="3" fill="#3b3b3b"/><path d="M4.5 260.0H42.0" stroke="#2c2c2c" stroke-width="1"/><path d="M4.5 299.5H42.0" stroke="#2c2c2c" stroke-width="1"/>
<g transform="translate(23.2 239.5) scale(1.13)"><path d="M0 -10V10M-10 0H10" stroke="#c6c6c6" stroke-width="2"/><path d="M0 -12L-3.5 -7.5H3.5ZM0 12L-3.5 7.5H3.5ZM-12 0L-7.5 -3.5V3.5ZM12 0L7.5 -3.5V3.5Z" fill="#c6c6c6"/></g>
<g transform="translate(23.2 280.0) scale(1.13)"><path d="M0 -10A10 10 0 0 0 -7.5 6.5M0 10A10 10 0 0 0 7.5 -6.5" stroke="#c6c6c6" stroke-width="2.2" fill="none"/><path d="M-11 4.5L-4.5 9L-11 10ZM11 -4.5L4.5 -9L11 -10Z" fill="#c6c6c6"/></g>
<g transform="translate(23.2 320.5) scale(1.13)"><path d="M-9.5 0V-10.5H10.5V10.5H0" stroke="#c6c6c6" stroke-width="2" fill="none"/><path d="M0 -3H3V0" stroke="#c6c6c6" stroke-width="1.6" fill="none"/><rect x="-11" y="-1.5" width="10.5" height="11" rx="2.5" fill="#c6c6c6"/></g>
<rect x="4.5" y="352.5" width="37.5" height="118.8" rx="3" fill="#3b3b3b"/><path d="M4.5 392.0H42.0" stroke="#2c2c2c" stroke-width="1"/><path d="M4.5 431.5H42.0" stroke="#2c2c2c" stroke-width="1"/>
<g transform="translate(23.2 371.5) scale(1.00)"><path d="M-0.6 -0.3L2.2 -9.1L7.8 -13.1L13.4 -9.5L12.2 -3.5L1.4 0.9Z" fill="#c8c8c8" stroke="#1a1a1a" stroke-width="0.7"/><path d="M0.4 0L6.6 -6.7" stroke="#111" stroke-width="1"/><circle cx="6.6" cy="-6.7" r="1.4" fill="#111"/><rect x="-12.4" y="3.3" width="10.8" height="10.4" fill="#e8a75e" stroke="#2a1a0a" stroke-width="0.6"/></g>
<g transform="translate(23.2 411.5) scale(1.00)"><path d="M-0.6 -0.3L2.2 -9.1L7.8 -13.1L13.4 -9.5L12.2 -3.5L1.4 0.9Z" fill="#c8c8c8" stroke="#1a1a1a" stroke-width="0.7"/><path d="M0.4 0L6.6 -6.7" stroke="#111" stroke-width="1"/><circle cx="6.6" cy="-6.7" r="1.4" fill="#111"/><path d="M-12.6 8.9H12.6" stroke="#d0d0d0" stroke-width="2.4"/><circle cx="0.2" cy="8.9" r="2.8" fill="#e8a75e" stroke="#1a1a1a" stroke-width="0.8"/></g>
<g transform="translate(23.2 451.0) scale(1.00)"><rect x="-10.5" y="-10" width="21" height="20" fill="#c6c6c6"/><rect x="-5.3" y="-4.8" width="10.6" height="10.6" fill="#e8a75e" stroke="#141414" stroke-width="1.4"/></g>
<rect x="4.5" y="475.5" width="37.5" height="158.2" rx="3" fill="#3b3b3b"/><path d="M4.5 515.0H42.0" stroke="#2c2c2c" stroke-width="1"/><path d="M4.5 555.0H42.0" stroke="#2c2c2c" stroke-width="1"/><path d="M4.5 595.0H42.0" stroke="#2c2c2c" stroke-width="1"/>
<g transform="translate(23.2 494.5) scale(1.00)"><path d="M-11.4 -2.7V7.3L0 13L11.4 7.3V-2.7" fill="#2a2a2a" stroke="#d0d0d0" stroke-width="2"/><path d="M0 2V13" stroke="#d0d0d0" stroke-width="1.8"/><path d="M-12.2 -2.7L-6.5 -11L0 -13L6.5 -11L12.2 -2.7L0 3Z" fill="#e8a75e" stroke="#1a1a1a" stroke-width="0.7"/><path d="M0 -11L5 -8.2L0 -5.5L-5 -8.2Z" fill="#333"/><path d="M0 -5.5V3" stroke="#1a1a1a" stroke-width="1.2"/></g>
<g transform="translate(23.2 534.5) scale(1.00)"><path d="M0 -14L11.4 -7.2V6.4L0 12.4L-11.4 6.4V-7.2Z" fill="#2a2a2a" stroke="#d0d0d0" stroke-width="2"/><path d="M0 1V12.4" stroke="#d0d0d0" stroke-width="1.8"/><path d="M-11.4 -7.2L0 -14L11.4 -7.2L0 -0.5Z" fill="#333" stroke="#e8a75e" stroke-width="2.2" stroke-linejoin="round"/><path d="M-12.4 -7L0 -0.5L12.4 -7V1.2L0 5.2L-12.4 1.2Z" fill="#e8a75e"/><path d="M0 -0.5V5.2" stroke="#1a1a1a" stroke-width="1.2"/></g>
<g transform="translate(23.2 575.0) scale(1.00)"><rect x="-11" y="-9.5" width="22" height="3.2" fill="#e8a75e"/><path d="M-11 -4.5H11V9.5H6.5A6.5 6.5 0 0 0 -6.5 9.5H-11Z" fill="#c6c6c6"/></g>
<g transform="translate(23.4 615.0) scale(1.00)"><path d="M-4 -9.8L-6.5 -8.3M4 -9.8L6.5 -8.3M-10 -3.5V3.5M10 -3.5V3.5M-4 9.5L-6.5 8M4 9.5L6.5 8" stroke="#d0d0d0" stroke-width="1.5" fill="none"/><g fill="#d0d0d0" stroke="#111" stroke-width="0.8"><rect x="-2.5" y="-14" width="5" height="5"/><rect x="-12.5" y="-9.3" width="5" height="5"/><rect x="7.5" y="-9.3" width="5" height="5"/><rect x="-12.5" y="4" width="5" height="5"/><rect x="7.5" y="4" width="5" height="5"/><rect x="-2.5" y="8.5" width="5" height="5"/></g><g fill="#111"><circle cx="0" cy="-11.5" r="0.9"/><circle cx="-10" cy="-6.8" r="0.9"/><circle cx="10" cy="-6.8" r="0.9"/><circle cx="-10" cy="6.5" r="0.9"/><circle cx="10" cy="6.5" r="0.9"/><circle cx="0" cy="11" r="0.9"/></g><circle cx="0" cy="-5" r="2.4" fill="none" stroke="#d0d0d0" stroke-width="1.5"/><path d="M-3.4 -2.5H3.4L5.8 5Q5.8 6.5 4.3 6.5H-4.3Q-5.8 6.5 -5.8 5Z" fill="#d0d0d0"/></g>
<rect x="4.5" y="638.5" width="37.5" height="37.9" rx="3" fill="#3b3b3b"/><path d="M42.0 676.0L37.0 676.0L42.0 671.0Z" fill="#b8b8b8"/>
<g transform="translate(23.2 657.0) scale(1.13)"><path d="M-8 -5Q-8 -11 0 -11Q8 -11 8 -5V2Q8 11 0 11Q-8 11 -8 2Z" fill="#c6c6c6"/><rect x="-5" y="-4.5" width="10" height="2.5" fill="#222"/><rect x="-11" y="-5.5" width="2.5" height="4.5" fill="#c6c6c6"/><rect x="8.5" y="-5.5" width="2.5" height="4.5" fill="#c6c6c6"/></g>
<rect x="4.5" y="681.0" width="37.5" height="78.0" rx="3" fill="#3b3b3b"/><path d="M4.5 720.0H42.0" stroke="#2c2c2c" stroke-width="1"/><path d="M42.0 719.5L37.0 719.5L42.0 714.5Z" fill="#b8b8b8"/>
<g transform="translate(23.5 700.0) scale(1.00)"><path d="M-2 -12L0 -13L11.5 -6.5V6.5L0 13L-4 10.8M-7 -9L-11.5 -6.5V6.5L-7 9" fill="none" stroke="#d0d0d0" stroke-width="1.7"/><path d="M0 -2L9 -7M0 -2V11" fill="none" stroke="#d0d0d0" stroke-width="1.6"/><path d="M-2 -4L7 -9" stroke="#555" stroke-width="1"/><path d="M-5 10.8V-3.5L5.3 -9.5" fill="none" stroke="#e8a75e" stroke-width="2.6" stroke-linecap="round"/></g>
<g transform="translate(23.2 740.0) scale(1.13)"><path d="M-9.5 -11V11M9.5 -11V11M-9.5 -11H9.5M-9.5 11H9.5" stroke="#c6c6c6" stroke-width="2" fill="none"/><path d="M-9.5 -3.5H9.5M-9.5 3.5H9.5" stroke="#e8a75e" stroke-width="2.4"/></g>
<rect x="4.5" y="763.7" width="37.5" height="77.3" rx="3" fill="#3b3b3b"/><path d="M4.5 802.0H42.0" stroke="#2c2c2c" stroke-width="1"/><path d="M42.0 801.5L37.0 801.5L42.0 796.5Z" fill="#b8b8b8"/>
<g transform="translate(23.5 783.0) scale(1.00)"><path d="M-12.3 8.8V4Q-12.3 -4 -3 -4H12.5V8.8Z" fill="#c6c6c6"/><path d="M-1.5 -4V-9.6H10.5V-4H8.8V-7H1.5V-5.2H-1.5Z" fill="#c6c6c6"/><circle cx="-5.5" cy="2.8" r="1.8" fill="#333"/></g>
<g transform="translate(23.5 822.5) scale(1.00)"><path d="M-12.3 -11H-7.8M-1.5 -11H12.5M-12.3 11H-7.8M-1.5 11H12.5M-5.1 -12.5V12.5M-3 0H7M0.8 -5.5L6.8 0L0.8 5.5" stroke="#d0d0d0" stroke-width="2.2" fill="none"/></g>
<rect x="1507.0" y="77.9" width="38.0" height="37.4" rx="3" fill="#3b3b3b"/>
<g transform="translate(1526.0 96.5) scale(1.18)"><path d="M-8.5 -7V9H10" stroke="#d8dcff" stroke-width="2" fill="none"/><path d="M-11 -6L-8.5 -10L-6 -6ZM7 6.5L11 9L7 11.5Z" fill="#d8dcff"/><circle cx="4" cy="-3" r="6.5" fill="#c8ccf5"/></g>
<rect x="1507.0" y="129.0" width="38.0" height="119.0" rx="3" fill="#3b3b3b"/><path d="M1507.0 169.0H1545.0" stroke="#2c2c2c" stroke-width="1"/><path d="M1507.0 208.5H1545.0" stroke="#2c2c2c" stroke-width="1"/><path d="M1545.0 168.5L1540.0 168.5L1545.0 163.5Z" fill="#b8b8b8"/><path d="M1545.0 208.0L1540.0 208.0L1545.0 203.0Z" fill="#b8b8b8"/><path d="M1545.0 247.5L1540.0 247.5L1545.0 242.5Z" fill="#b8b8b8"/>
<g transform="translate(1526.0 148.5) scale(1.18)"><rect x="-9.5" y="-9.5" width="19" height="19" fill="none" stroke="#9ed4f2" stroke-width="2.3"/></g>
<g transform="translate(1526.0 188.5) scale(1.18)"><path d="M0 -10.5L10 -5V6L0 11.5L-10 6V-5Z" fill="#9ed4f2" stroke="#1a1a1a" stroke-width="0.6"/><path d="M-10 -5L0 0.5L10 -5M0 0.5V11.5" stroke="#2a2a2a" stroke-width="1.2" fill="none"/></g>
<g transform="translate(1526.0 228.5) scale(1.18)"><path d="M-9.5 -4.5V-10H9.5V-4.5M0 -10V10M-4.5 10H4.5" stroke="#9ed4f2" stroke-width="2.3" fill="none"/></g>
<rect x="1507.0" y="261.7" width="38.0" height="116.3" rx="3" fill="#3b3b3b"/><path d="M1507.0 300.5H1545.0" stroke="#2c2c2c" stroke-width="1"/><path d="M1507.0 339.5H1545.0" stroke="#2c2c2c" stroke-width="1"/><path d="M1545.0 339.0L1540.0 339.0L1545.0 334.0Z" fill="#b8b8b8"/><path d="M1545.0 377.5L1540.0 377.5L1545.0 372.5Z" fill="#b8b8b8"/>
<path d="M1545 300L1540 300L1545 295Z" fill="#d8d48e"/>
<g transform="translate(1526.0 280.5) scale(1.18)"><path d="M0 -10L8.5 -5V5L0 10L-8.5 5V-5Z" fill="none" stroke="#eee" stroke-width="1" stroke-dasharray="1.5 1.5"/><circle r="6.5" fill="#7fdc86"/><g fill="#fff" stroke="#111" stroke-width="0.6"><rect x="-2" y="-12" width="4" height="4"/><rect x="-10.5" y="-7" width="4" height="4"/><rect x="6.5" y="-7" width="4" height="4"/><rect x="-10.5" y="3" width="4" height="4"/><rect x="6.5" y="3" width="4" height="4"/><rect x="-2" y="8" width="4" height="4"/></g></g>
<g transform="translate(1526.0 320.5) scale(1.18)"><path d="M0 -11L5 -8V-2L0 1L-5 -2V-8Z" fill="#7fdc86"/><path d="M-5 -2L0 1V7L-5 10L-10 7V1Z" fill="#7fdc86"/><path d="M5 -2L10 1V7L5 10L0 7V1Z" fill="#7fdc86"/><path d="M0 -5L5 -8V-2L0 1ZM-5 4L0 1V7L-5 10ZM5 4L10 1V7L5 10Z" fill="#5bb563"/></g>
<g transform="translate(1526.0 360.5) scale(1.18)"><circle r="6.5" fill="#fff"/><circle r="3" fill="#7fdc86"/><g fill="#7fdc86"><circle cx="0" cy="-9" r="2.5"/><circle cx="7.8" cy="-4.5" r="2.5"/><circle cx="7.8" cy="4.5" r="2.5"/><circle cx="0" cy="9" r="2.5"/><circle cx="-7.8" cy="4.5" r="2.5"/><circle cx="-7.8" cy="-4.5" r="2.5"/></g></g>
<rect x="1507.0" y="383.7" width="38.0" height="120.3" rx="3" fill="#3b3b3b"/><path d="M1507.0 423.0H1545.0" stroke="#2c2c2c" stroke-width="1"/><path d="M1507.0 462.5H1545.0" stroke="#2c2c2c" stroke-width="1"/><path d="M1545.0 462.0L1540.0 462.0L1545.0 457.0Z" fill="#b8b8b8"/><path d="M1545.0 503.5L1540.0 503.5L1545.0 498.5Z" fill="#b8b8b8"/>
<path d="M1545 422.5L1540 422.5L1545 417.5Z" fill="#d8d48e"/>
<g transform="translate(1526.0 403.0) scale(1.00)"><path d="M-11.5 -7.8L-1.7 -13.3L4.4 -10.9L9.9 -2.9L10.5 5.6L2 12.3L-6.6 3.2L-11.5 -1.7Z" fill="none" stroke="#9fa5ff" stroke-width="2.3" stroke-linejoin="round"/><path d="M-7.8 -5.4Q3 -3 2 8.7" stroke="#9fa5ff" stroke-width="1.9" fill="none"/></g>
<g transform="translate(1526.0 442.5) scale(1.18)"><path d="M-8.5 -10V9H10" stroke="#9fa5ff" stroke-width="2" fill="none"/><path d="M-11 -6.5L-8.5 -10.5L-6 -6.5ZM7 6.5L11 9L7 11.5Z" fill="#9fa5ff"/><path d="M4 -11L9 -8.5V-2.5L4 0L-1 -2.5V-8.5ZM-1 -8.5L4 -6L9 -8.5M4 -6V0" stroke="#9fa5ff" stroke-width="1.2" fill="none"/></g>
<g transform="translate(1526.0 485.0) scale(1.00)"><path d="M-10.3 -4.8L-1.8 -0.2V11.6L-10.3 7.2ZM0.8 -11.2L9.3 -6.5V5.7L0.8 1.3Z" fill="none" stroke="#e8b0f5" stroke-width="2.2" stroke-linejoin="round"/><path d="M-6 3.5L5 -3" stroke="#e8b0f5" stroke-width="1.3"/></g>
<rect x="1507.0" y="518.0" width="38.0" height="117.7" rx="3" fill="#3b3b3b"/><path d="M1507.0 557.5H1545.0" stroke="#2c2c2c" stroke-width="1"/><path d="M1507.0 597.0H1545.0" stroke="#2c2c2c" stroke-width="1"/><path d="M1545.0 557.0L1540.0 557.0L1545.0 552.0Z" fill="#b8b8b8"/><path d="M1545.0 596.5L1540.0 596.5L1545.0 591.5Z" fill="#b8b8b8"/><path d="M1545.0 635.0L1540.0 635.0L1545.0 630.0Z" fill="#b8b8b8"/>
<g transform="translate(1526.0 537.0) scale(1.18)"><circle r="10.5" fill="none" stroke="#c8ccf5" stroke-width="2"/><ellipse rx="4.5" ry="10.5" fill="none" stroke="#c8ccf5" stroke-width="1.6"/><path d="M-10.5 0H10.5M-9 -5H9M-9 5H9" stroke="#c8ccf5" stroke-width="1.6"/></g>
<g transform="translate(1526.0 577.0) scale(1.18)"><path d="M-10 -9H-3Q0 -9 0 -6V-3" stroke="#c8ccf5" stroke-width="1.8" fill="none"/><rect x="-10" y="-3" width="14" height="10" rx="2" fill="none" stroke="#c8ccf5" stroke-width="2.2"/><path d="M5.5 2L11 -3V7Z" fill="#c8ccf5"/></g>
<g transform="translate(1526.0 617.0) scale(1.18)"><path d="M-4 4Q-7 1.5 -7 -1.5A7 7 0 0 1 7 -1.5Q7 1.5 4 4V6H-4Z" fill="none" stroke="#e6e6f5" stroke-width="1.8"/><path d="M-3.5 8H3.5M-2.5 10.5H2.5M0 -12V-9.5M-11 -1.5H-8.5M11 -1.5H8.5M-8 -9L-6.3 -7.3M8 -9L6.3 -7.3" stroke="#e6e6f5" stroke-width="1.6"/></g>
<rect x="1507.0" y="661.0" width="38.0" height="117.0" rx="3" fill="#3b3b3b"/><path d="M1507.0 700.0H1545.0" stroke="#2c2c2c" stroke-width="1"/><path d="M1507.0 739.5H1545.0" stroke="#2c2c2c" stroke-width="1"/><path d="M1545.0 699.5L1540.0 699.5L1545.0 694.5Z" fill="#b8b8b8"/>
<g transform="translate(1526.0 680.0) scale(1.18)"><path d="M0 -11L9.5 -5.5V5.5L0 11L-9.5 5.5V-5.5Z" fill="none" stroke="#5a5a5a" stroke-width="1.5"/><path d="M-5 5L-4 1.5L4 -6.5L6.5 -4L-1.5 4Z" fill="#5a5a5a"/></g>
<g transform="translate(1526.0 720.5) scale(1.00)"><path d="M0 -18L15.6 -9V9L0 18L-15.6 9V-9Z" fill="#e46a6a"/><path d="M-15.6 -9L0 -3L15.6 -9M-15.6 9L0 3L15.6 9M0 -18V-3M0 3V18" stroke="#c94a4a" stroke-width="1" fill="none" opacity="0.5"/><path d="M-15.6 -4L0 1L15.6 -4V4L0 -1L-15.6 4Z" fill="#d84545" opacity="0.6"/><path d="M-3.2 3Q-7.5 0 -7.5 -4.5A7.5 7.5 0 0 1 7.5 -4.5Q7.5 0 3.2 3V6H-3.2Z" fill="none" stroke="#8a0f0f" stroke-width="3"/><rect x="-3.5" y="6.5" width="7" height="5" rx="1.5" fill="#8a0f0f"/></g>
<g transform="translate(1526.0 760.5) scale(1.00)"><path d="M0 -18L15.6 -9V9L0 18L-15.6 9V-9Z" fill="#e46a6a"/><path d="M-15.6 -9L0 -3L15.6 -9M-15.6 9L0 3L15.6 9M0 -18V-3M0 3V18" stroke="#c94a4a" stroke-width="1" fill="none" opacity="0.5"/><path d="M-15.6 -4L0 1L15.6 -4V4L0 -1L-15.6 4Z" fill="#d84545" opacity="0.6"/><path d="M-10.5 -4.5Q-10.5 -6.5 -8.5 -6.5H-5L-3 -9.5H3L5 -6.5H8.5Q10.5 -6.5 10.5 -4.5V7Q10.5 9 8.5 9H-8.5Q-10.5 9 -10.5 7Z" fill="#8a0f0f"/><circle cx="0" cy="1.5" r="4" fill="none" stroke="#e46a6a" stroke-width="2.2"/></g>
<path d="M1557 98H1573M1557 102H1573M1557 106H1573" stroke="#a8a8a8" stroke-width="2"/>
<path d="M1557 598H1573M1557 602H1573M1557 606H1573" stroke="#a8a8a8" stroke-width="2"/>
<path d="M1846 97L1852 101.5L1846 106Z" fill="#d0d0d0"/>
<g transform="translate(1920.0 101.5) scale(1.00)"><circle cx="-1.5" cy="-1.5" r="5.5" fill="none" stroke="#9a9a9a" stroke-width="1.6"/><path d="M2.5 2.5L7 7" stroke="#9a9a9a" stroke-width="2"/></g>
<g transform="translate(1942.5 101.5) scale(1.00)"><path d="M-6.5 8V-2L0 -8L6.5 -2V8H1.5V3.5H-1.5V8Z" fill="none" stroke="#9a9a9a" stroke-width="1.6" stroke-linejoin="round"/></g>
<g transform="translate(1965.0 101.5) scale(1.00)"><path d="M-7.5 -5H7.5M-5 -0.5H5M-2 4H2" stroke="#9a9a9a" stroke-width="2"/></g>
<g transform="translate(1988.0 101.5) scale(1.00)"><path d="M1 -7.5H-7.5V7.5H7.5V-1" stroke="#9a9a9a" stroke-width="1.6" fill="none"/><path d="M-2 2L7.5 -7.5M2.5 -7.5H7.5V-2.5" stroke="#9a9a9a" stroke-width="1.6" fill="none"/></g>
<path d="M1558.5 116V190M1563 127.5H1570M1570.5 139V150.5H1580M1570.5 161V172.5H1580M1563 195H1570" stroke="#6a6a6a" stroke-width="1" fill="none"/>
<rect x="1553.5" y="122.5" width="9.5" height="10" fill="#2a2a2a" stroke="#8a8a8a" stroke-width="1"/><path d="M1555.5 127.5H1561" stroke="#b0b0b0" stroke-width="1"/>
<rect x="1553.5" y="190" width="9.5" height="10" fill="#2e2e2e" stroke="#8a8a8a" stroke-width="1"/><path d="M1555.5 195H1561M1558.3 192.3V197.7" stroke="#b0b0b0" stroke-width="1"/>
<rect x="1570" y="120.5" width="8.5" height="8.5" fill="#fff" stroke="#111" stroke-width="0.6"/><rect x="1575" y="125.5" width="8.5" height="8" fill="#7fd87f"/>
<g transform="translate(1589.0 149.5) scale(1.00)"><path d="M0 -5L6 5.8H-6Z" fill="#90cdf0" stroke="#111" stroke-width="1.1" stroke-linejoin="round"/><circle cx="0" cy="-5" r="2.3" fill="#fff" stroke="#111" stroke-width="0.7"/><circle cx="-6" cy="5.8" r="2.3" fill="#fff" stroke="#111" stroke-width="0.7"/><circle cx="6" cy="5.8" r="2.3" fill="#fff" stroke="#111" stroke-width="0.7"/></g>
<g transform="translate(1589.0 171.5) scale(1.00)"><path d="M0 -5L6 5.8H-6Z" fill="#90cdf0" stroke="#111" stroke-width="1.1" stroke-linejoin="round"/><circle cx="0" cy="-5" r="2.3" fill="#fff" stroke="#111" stroke-width="0.7"/><circle cx="-6" cy="5.8" r="2.3" fill="#fff" stroke="#111" stroke-width="0.7"/><circle cx="6" cy="5.8" r="2.3" fill="#fff" stroke="#111" stroke-width="0.7"/></g>
<g transform="translate(1577.0 194.0) scale(1.00)"><path d="M-6 -6V6H7" stroke="#c8ccf5" stroke-width="1.6" fill="none"/><path d="M-8 -3.5L-6 -7L-4 -3.5ZM4.5 4L8 6L4.5 8Z" fill="#c8ccf5"/><circle cx="3" cy="-1" r="5" fill="#c8ccf5"/></g>
<g transform="translate(1656.0 126.5) scale(1.00)"><path d="M0 -7L7 -2L0 3L-7 -2Z" fill="#6c6c6c"/><path d="M-7 1.5L0 6.5L7 1.5" stroke="#6c6c6c" stroke-width="2" fill="none"/></g>
<g transform="translate(1656.0 149.0) scale(1.00)"><path d="M0 -7L7 -2L0 3L-7 -2Z" fill="#6c6c6c"/><path d="M-7 1.5L0 6.5L7 1.5" stroke="#6c6c6c" stroke-width="2" fill="none"/></g>
<g transform="translate(1656.0 171.5) scale(1.00)"><path d="M0 -7L7 -2L0 3L-7 -2Z" fill="#6c6c6c"/><path d="M-7 1.5L0 6.5L7 1.5" stroke="#6c6c6c" stroke-width="2" fill="none"/></g>
<g transform="translate(1656.0 194.0) scale(1.00)"><path d="M0 -7L7 -2L0 3L-7 -2Z" fill="#6c6c6c"/><path d="M-7 1.5L0 6.5L7 1.5" stroke="#6c6c6c" stroke-width="2" fill="none"/></g>
<circle cx="1671.2" cy="121.5" r="3" fill="#6a6a6a"/>
<circle cx="1671.2" cy="130.5" r="3" fill="#6a6a6a"/>
<circle cx="1671.2" cy="145.0" r="3" fill="#6a6a6a"/>
<circle cx="1671.2" cy="154.0" r="3" fill="#6a6a6a"/>
<circle cx="1671.2" cy="168.0" r="3" fill="#6a6a6a"/>
<circle cx="1671.2" cy="177.0" r="3" fill="#6a6a6a"/>
<circle cx="1671.2" cy="190.0" r="3" fill="#e06a6a"/>
<circle cx="1671.2" cy="199.0" r="3" fill="#e06a6a"/>
<path d="M1677 127L1680.5 131L1687 123.5" stroke="#a8a8a8" stroke-width="1.3" fill="none"/>
<g transform="translate(1701.0 148.0) scale(1.00)"><path d="M-6 7V-6H7" stroke="#8f8ff0" stroke-width="1.6" fill="none"/><path d="M-4.5 -4.5H5A9.5 9.5 0 0 1 -4.5 5Z" fill="#c8c8c8" stroke="#111" stroke-width="0.6"/></g>
<g transform="translate(1723.0 148.5) scale(1.00)"><rect x="-7" y="-7" width="14" height="14" fill="#c8c8c8"/><rect x="-5" y="-5" width="5" height="5" fill="#c8c8c8" stroke="#111" stroke-width="1.5"/><rect x="0.5" y="0.5" width="4.5" height="4.5" fill="#222"/></g>
<g transform="translate(1701.0 171.0) scale(1.00)"><path d="M-6 7V-6H7" stroke="#8f8ff0" stroke-width="1.6" fill="none"/><path d="M-4.5 -4.5H5A9.5 9.5 0 0 1 -4.5 5Z" fill="#c8c8c8" stroke="#111" stroke-width="0.6"/></g>
<g transform="translate(1723.0 171.5) scale(1.00)"><rect x="-7" y="-7" width="14" height="14" fill="#c8c8c8"/><rect x="-5" y="-5" width="5" height="5" fill="#c8c8c8" stroke="#111" stroke-width="1.5"/><rect x="0.5" y="0.5" width="4.5" height="4.5" fill="#222"/></g>
<rect x="1562.75" y="136.25" width="162.5" height="24.5" fill="none" stroke="#e8432b" stroke-width="5.5"/>
<g transform="translate(1832.0 602.0) scale(1.00)"><path d="M7 0H-7M-2.5 -5L-7.5 0L-2.5 5" stroke="#a8a8a8" stroke-width="1.8" fill="none"/></g>
<g transform="translate(1854.0 602.0) scale(1.00)"><path d="M-7 0H7M2.5 -5L7.5 0L2.5 5" stroke="#5a5a5a" stroke-width="1.8" fill="none"/></g>
<g transform="translate(1875.5 602.0) scale(1.00)"><path d="M0 7V-7M-5 -2.5L0 -7.5L5 -2.5" stroke="#5a5a5a" stroke-width="1.8" fill="none"/></g>
<g transform="translate(1897.5 602.0) scale(1.00)"><circle cx="-1.5" cy="-1.5" r="5.5" fill="none" stroke="#9a9a9a" stroke-width="1.6"/><path d="M2.5 2.5L7 7" stroke="#9a9a9a" stroke-width="2"/></g>
<g transform="translate(1920.0 602.0) scale(1.00)"><path d="M-7.5 -5H7.5M-5 -0.5H5M-2 4H2" stroke="#9a9a9a" stroke-width="2"/></g>
<g transform="translate(1942.5 602.0) scale(1.00)"><rect x="-6" y="-1" width="12" height="8.5" fill="none" stroke="#9a9a9a" stroke-width="1.6"/><path d="M-3.5 -1V-4A3.5 3.5 0 0 1 3.5 -4V-1" stroke="#9a9a9a" stroke-width="1.6" fill="none"/></g>
<g transform="translate(1965.0 602.0) scale(1.00)"><circle r="7.5" fill="none" stroke="#9a9a9a" stroke-width="1.6"/><circle r="3.3" fill="none" stroke="#9a9a9a" stroke-width="1.6"/><circle r="1" fill="#9a9a9a"/></g>
<g transform="translate(1988.0 602.0) scale(1.00)"><path d="M1 -7.5H-7.5V7.5H7.5V-1" stroke="#9a9a9a" stroke-width="1.6" fill="none"/><path d="M-2 2L7.5 -7.5M2.5 -7.5H7.5V-2.5" stroke="#9a9a9a" stroke-width="1.6" fill="none"/></g>
<g transform="translate(1564.5 631.0) scale(1.00)"><path d="M-8 -6.5V9M-6 -8.5H8M8 -6.5V7M-5.5 9H8" stroke="#d89450" stroke-width="1.6" fill="none"/><path d="M-3 -4.5L4 1.5H0L-3 5Z" fill="#c8c8c8"/></g>
<path d="M1981 628.5L1985 632.5L1989 628.5" stroke="#d8d8d8" stroke-width="1.6" fill="none"/>
</svg>
<svg class="a" style="left:0;top:0" width="2000" height="1000" viewBox="0 0 2000 1000">
<path d="M582.7 86V171" stroke="#e8432b" stroke-width="5.6"/><path d="M570.1 169.5H595.3L582.7 194.5Z" fill="#e8432b"/>
<path d="M1006.7 86V171" stroke="#e8432b" stroke-width="5.6"/><path d="M994.1 169.5H1019.3L1006.7 194.5Z" fill="#e8432b"/>
<path d="M280 331.3H398" stroke="#e8432b" stroke-width="5.4"/><path d="M396.5 318.5V344.1L422 331.3Z" fill="#e8432b"/>
<path d="M280 792.5H398" stroke="#e8432b" stroke-width="5.4"/><path d="M396.5 779.7V805.3L422 792.5Z" fill="#e8432b"/>
</svg>
</body></html>
